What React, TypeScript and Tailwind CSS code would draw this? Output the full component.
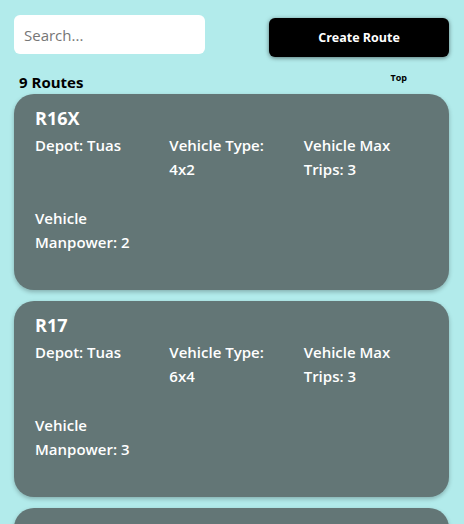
import React from 'react';

interface Route {
  code: string;
  depot: string;
  vehicleType: string;
  maxTrips: number;
  manpower: number;
}

const ROUTES: Route[] = [
  { code: 'R16X', depot: 'Tuas', vehicleType: '4x2', maxTrips: 3, manpower: 2 },
  { code: 'R17', depot: 'Tuas', vehicleType: '6x4', maxTrips: 3, manpower: 3 },
  { code: 'R18', depot: 'Tuas', vehicleType: '4x2', maxTrips: 3, manpower: 2 },
];

function RouteCard({ route }: { route: Route }) {
  return (
    <div className="rounded-[20px] bg-[#637676] pt-[10px] pb-[36px] pl-[21px] pr-[21px] text-white shadow-[0_2px_4px_rgba(0,0,0,0.25)]">
      <div className="text-[18px] leading-[28px] font-bold">{route.code}</div>
      <div className="mt-px grid grid-cols-3 gap-x-[10px] gap-y-[25px] text-[15px] leading-[24px] font-semibold">
        <div className="pr-[10px]">Depot: {route.depot}</div>
        <div className="pr-[10px]">Vehicle Type: {route.vehicleType}</div>
        <div className="pr-[10px]">Vehicle Max Trips: {route.maxTrips}</div>
        <div className="pr-[10px]">Vehicle Manpower: {route.manpower}</div>
      </div>
    </div>
  );
}

export default function App() {
  return (
    <div
      className="min-h-[524px] bg-[#b2ebeb] pt-[15px]"
      style={{ fontFamily: '"Open Sans", "Noto Sans", sans-serif' }}
    >
      {/* Search + create */}
      <div className="flex items-start justify-between pl-[14px] pr-[15px]">
        <input
          type="text"
          placeholder="Search..."
          className="h-[39px] w-[191px] rounded-[6px] bg-white pl-[10px] text-[15px] text-black outline-none placeholder:text-[#767676]"
        />
        <button className="mt-[3px] h-[39px] w-[180px] rounded-[6px] bg-black pt-[2px] text-[12.5px] font-bold text-white shadow-[0_1px_4px_rgba(0,0,0,0.5)]">
          Create Route
        </button>
      </div>

      {/* Count row */}
      <div className="mt-[13px] flex items-start justify-between pl-[19px] pr-[57px]">
        <span className="text-[15px] leading-[24px] font-bold text-black">{9} Routes</span>
        <span className="mt-[1px] text-[9px] leading-[14px] font-bold text-black">Top</span>
      </div>

      {/* Route list */}
      <div className="flex flex-col gap-[11px] pl-[14px] pr-[15px]">
        {ROUTES.map((r) => (
          <RouteCard key={r.code} route={r} />
        ))}
      </div>
    </div>
  );
}
